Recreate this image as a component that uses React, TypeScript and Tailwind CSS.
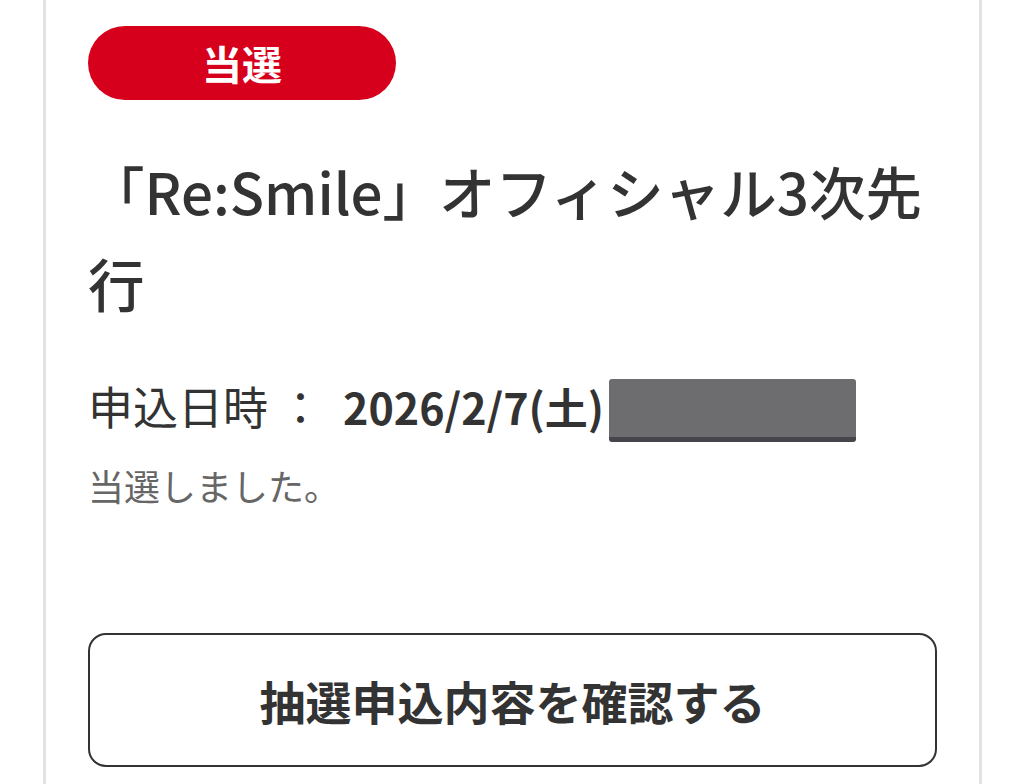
import React from "react";

export default function App() {
  const font = { fontFamily: '"Noto Sans CJK JP", "Noto Sans", sans-serif' };
  return (
    <div className="min-h-[784px] w-[1024px] bg-white overflow-hidden" style={font}>
      <div className="ml-[43px] w-[939px] min-h-[784px] border-x-[3px] border-[#e2e2e2] bg-white px-[42px] pt-[26px]">
        <div className="flex h-[74px] w-[308px] items-center justify-center rounded-full bg-[#d7001c] text-[40px] font-bold leading-none text-white">
          当選
        </div>
        <h1 className="mt-[44px] text-[56.5px] font-medium leading-[92px] text-[#333333]">
          「Re:Smile」オフィシャル3次先行
        </h1>
        <div className="mt-[41px] flex items-center text-[45px] leading-[72px] text-[#333333]">
          <span>申込日時 ： </span>
          <span className="ml-[20px] text-[43px] font-bold">2026/2/7(土)</span>
          <span className="ml-[5px] mt-[10px] h-[63px] w-[247px] rounded-[3px] border-b-[5px] border-[#45464c] bg-[#6d6d70]"></span>
        </div>
        <p className="mt-[14px] text-[36px] leading-[58px] text-[#666666]">当選しました。</p>
        <button className="mt-[119px] flex h-[134px] w-full items-center justify-center rounded-[18px] border-2 border-[#333333] bg-white text-[46px] font-bold text-[#333333]">
          抽選申込内容を確認する
        </button>
      </div>
    </div>
  );
}
